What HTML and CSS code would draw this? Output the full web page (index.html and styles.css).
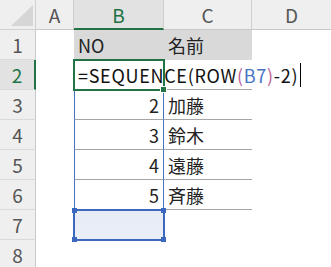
FILE: index.html
```html
<!DOCTYPE html>
<html lang="ja">
<head>
    <meta charset="UTF-8">
    <meta name="viewport" content="width=device-width, initial-scale=1.0">
    <title>SEQUENCE</title>
    <link rel="stylesheet" href="styles.css">
</head>
<body>
    <div class="sheet">
        <!-- 列見出し -->
        <div class="corner"><span class="corner-mark"></span></div>
        <div class="col-head">A</div>
        <div class="col-head active">B</div>
        <div class="col-head">C</div>
        <div class="col-head last">D</div>

        <!-- 1行目 -->
        <div class="row-head">1</div>
        <div class="cell"></div>
        <div class="cell title">NO</div>
        <div class="cell title">名前</div>
        <div class="cell"></div>

        <!-- 2行目: 入力中のセル -->
        <div class="row-head active">2</div>
        <div class="cell"></div>
        <div class="cell editing"><span class="formula">=SEQUENCE(ROW<span class="paren">(</span><span class="ref">B7</span><span class="paren">)</span>-2)</span><span class="caret"></span><span class="fill-handle"></span></div>
        <div class="cell line"></div>
        <div class="cell"></div>

        <div class="row-head">3</div>
        <div class="cell"></div>
        <div class="cell num spill line">2</div>
        <div class="cell line">加藤</div>
        <div class="cell"></div>

        <div class="row-head">4</div>
        <div class="cell"></div>
        <div class="cell num spill line">3</div>
        <div class="cell line">鈴木</div>
        <div class="cell"></div>

        <div class="row-head">5</div>
        <div class="cell"></div>
        <div class="cell num spill line">4</div>
        <div class="cell line">遠藤</div>
        <div class="cell"></div>

        <div class="row-head">6</div>
        <div class="cell"></div>
        <div class="cell num spill">5</div>
        <div class="cell line">斉藤</div>
        <div class="cell"></div>

        <!-- 参照先 B7 -->
        <div class="row-head">7</div>
        <div class="cell"></div>
        <div class="cell refbox">
            <span class="handle tl"></span>
            <span class="handle tr"></span>
            <span class="handle bl"></span>
            <span class="handle br"></span>
        </div>
        <div class="cell"></div>
        <div class="cell"></div>

        <div class="row-head">8</div>
        <div class="cell"></div>
        <div class="cell"></div>
        <div class="cell"></div>
        <div class="cell"></div>
    </div>
</body>
</html>
```

FILE: styles.css
```css
body {
    margin: 0;
    padding: 0;
    background: #ffffff;
    font-family: "Noto Sans CJK JP", "Noto Sans", sans-serif;
    overflow: hidden;
}

.sheet {
    display: grid;
    grid-template-columns: 36px 38px 90px 88px 1fr;
    grid-template-rows: repeat(9, 30px);
    width: 331px;
}

.corner {
    position: relative;
    background: #efefef;
    border-right: 1px solid #d0d0d0;
    border-bottom: 1px solid #d0d0d0;
    box-sizing: border-box;
}

.corner-mark {
    position: absolute;
    right: 2px;
    bottom: 3px;
    width: 0;
    height: 0;
    border-left: 22px solid transparent;
    border-bottom: 21px solid #d6d6d6;
}

.col-head {
    background: #efefef;
    color: #555;
    font-size: 19px;
    display: flex;
    align-items: center;
    justify-content: center;
    border-right: 1px solid #d0d0d0;
    border-bottom: 1px solid #c8c8c8;
    box-sizing: border-box;
}

.col-head.last {
    border-right: none;
}

.col-head.active {
    background: #e2e2e2;
    color: #217346;
    border-bottom: 2px solid #217346;
}

.row-head {
    background: #efefef;
    color: #555;
    font-size: 19px;
    display: flex;
    align-items: center;
    justify-content: center;
    border-right: 1px solid #c8c8c8;
    border-bottom: 1px solid #dadada;
    box-sizing: border-box;
}

.row-head.active {
    background: #e2e2e2;
    color: #217346;
    border-right: 2px solid #217346;
}

.cell {
    position: relative;
    font-size: 18px;
    color: #222;
    display: flex;
    align-items: center;
    padding: 0 4px 0 4px;
    box-sizing: border-box;
    white-space: nowrap;
}

.title {
    background: #d9d9d9;
}

.line {
    border-bottom: 1px solid #a6a6a6;
}

.num {
    justify-content: flex-end;
}

/* スピル範囲の枠 */
.spill {
    border-left: 1px solid #4a72c0;
    border-right: 1px solid #4a72c0;
}

.editing {
    z-index: 2;
    overflow: visible;
    color: #111;
}

.editing::after {
    content: "";
    position: absolute;
    left: -1px;
    top: -1px;
    right: -1px;
    bottom: -1px;
    border: 2px solid #217346;
}

.formula {
    flex-shrink: 0;
    letter-spacing: 0.7px;
}

.paren {
    color: #b9639a;
}

.ref {
    color: #4472c4;
}

.caret {
    flex-shrink: 0;
    width: 1px;
    height: 24px;
    margin-left: 2px;
    background: #000;
}

.fill-handle {
    position: absolute;
    right: -3px;
    bottom: -3px;
    width: 5px;
    height: 5px;
    background: #217346;
    border: 1px solid #fff;
    z-index: 1;
}

.refbox {
    z-index: 2;
    background: linear-gradient(to bottom, #e6ebf5, #eaeef7);
}

.refbox::after {
    content: "";
    position: absolute;
    left: -1px;
    top: -1px;
    right: -1px;
    bottom: -1px;
    border: 2px solid #3b67bd;
}

.handle {
    position: absolute;
    width: 5px;
    height: 5px;
    background: #3b67bd;
    z-index: 3;
}

.handle.tl { left: -2px; top: -2px; }
.handle.tr { right: -2px; top: -2px; }
.handle.bl { left: -2px; bottom: -2px; }
.handle.br { right: -2px; bottom: -2px; }
```
